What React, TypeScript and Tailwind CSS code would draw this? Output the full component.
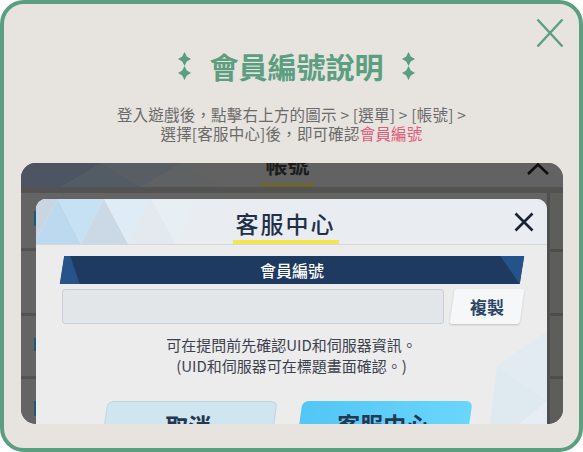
import React from 'react';

const font = { fontFamily: '"Noto Sans CJK TC", "Noto Sans", sans-serif' };

function Sparkle() {
    return (
        <svg width="13" height="28" viewBox="0 0 13 28" className="shrink-0">
            <path d="M6.5 0 L8.8 4.6 L13 7 L8.8 9.4 L6.5 14 L4.2 9.4 L0 7 L4.2 4.6Z" fill="#5b9e80" />
            <path d="M6.5 14 L8.8 18.6 L13 21 L8.8 23.4 L6.5 28 L4.2 23.4 L0 21 L4.2 18.6Z" fill="#5b9e80" />
        </svg>
    );
}

function LeftStrip() {
    return (
        <div className="w-[15px] flex flex-col items-end bg-[#646464]">
            <div className="h-[18px]" />
            <div className="h-[15px] w-[2px] bg-[#1d5874]" />
            <div className="h-[22px]" />
            <div className="h-[3px] w-full bg-[#535353]" />
            <div className="h-[62px]" />
            <div className="h-[3px] w-full bg-[#535353]" />
            <div className="h-[22px]" />
            <div className="h-[13px] w-[2px] bg-[#1d5874]" />
            <div className="h-[25px]" />
            <div className="h-[3px] w-full bg-[#535353]" />
            <div className="h-[22px]" />
            <div className="h-[15px] w-[2px] bg-[#1d5874]" />
        </div>
    );
}

function RightStrip() {
    return (
        <div className="w-[16px] flex flex-col border-l-[3px] border-[#4f4f4d] bg-[#5d5d5b]">
            <div className="h-[56px]" />
            <div className="h-[3px] w-full bg-[#4d4d4b]" />
            <div className="h-[61px]" />
            <div className="h-[3px] w-full bg-[#4d4d4b]" />
            <div className="h-[60px]" />
            <div className="h-[3px] w-full bg-[#4d4d4b]" />
        </div>
    );
}

function GameModal() {
    return (
        <div className="flex-1 flex flex-col rounded-t-[10px] overflow-hidden bg-[#ececec] relative">
            <div className="relative h-[46px] shrink-0 bg-[#e9edf1] border-b border-[#d4d8dc] flex flex-col items-center justify-end pr-[11px]">
                <svg className="absolute left-0 top-0" width="180" height="45" viewBox="0 0 180 45">
                    <polygon points="0,0 22,0 0,40" fill="#c9d6e1" />
                    <polygon points="0,45 0,40 22,0 45,45" fill="#bcd9ef" />
                    <polygon points="22,0 68,0 45,45" fill="#c6e0f4" />
                    <polygon points="45,45 68,0 92,45" fill="#cbd9e6" />
                    <polygon points="68,0 115,0 92,45" fill="#dfebf5" />
                    <polygon points="92,45 115,0 140,45" fill="#e3e9ef" />
                    <polygon points="115,0 160,0 140,45" fill="#e7eef4" />
                </svg>
                <div className="relative text-[23px] leading-[28px] font-medium tracking-[2px] text-[#1f3049] mb-[3px]">客服中心</div>
                <div className="relative w-[106px] h-[4px] bg-[#f4e54a]" />
                <svg className="absolute left-[478px] top-[13px]" width="20" height="20" viewBox="0 0 20 20">
                    <path d="M1.5 1.5 L18.5 18.5 M18.5 1.5 L1.5 18.5" stroke="#1a2232" strokeWidth="2.6" />
                </svg>
            </div>
            <div className="relative flex-1 flex flex-col pl-[26px] pr-[25px]">
                <svg className="absolute right-0 bottom-0" width="140" height="140" viewBox="0 0 140 140">
                    <polygon points="140,20 140,90 90,55" fill="#e2ebf1" />
                    <polygon points="90,55 140,90 80,140" fill="#dfe9f0" />
                    <polygon points="140,90 140,140 80,140" fill="#e6eef3" />
                    <polygon points="20,140 60,90 80,140" fill="#e8eef2" />
                </svg>
                <div className="relative mt-[11px] h-[28px] -skew-x-[9deg] bg-[#1f3a60] overflow-hidden flex items-center justify-center">
                    <svg className="absolute inset-0" width="100%" height="28" preserveAspectRatio="none" viewBox="0 0 462 28">
                        <polygon points="0,0 6,0 20,28 0,28" fill="#26548a" />
                        <polygon points="438,0 462,0 462,28" fill="#24538a" />
                    </svg>
                    <span className="relative skew-x-[9deg] text-white text-[16px] font-medium leading-[20px]">會員編號</span>
                </div>
                <div className="relative mt-[5px] h-[35px] flex gap-[8px]">
                    <div className="flex-1 bg-[#e2e6e8] border border-[#cbd0d5] rounded-[3px]" />
                    <div className="w-[70px] -skew-x-[8deg] bg-[#f6f7f8] rounded-[3px] shadow-[0_1px_2px_rgba(0,0,0,0.18)] flex items-center justify-center">
                        <span className="skew-x-[8deg] text-[17px] font-bold text-[#2b4566]">複製</span>
                    </div>
                </div>
                <div className="relative mt-[10px] text-center text-[15px] leading-[21px] text-[#3c424d]">
                    <div>可在提問前先確認UID和伺服器資訊。</div>
                    <div>(UID和伺服器可在標題畫面確認。)</div>
                </div>
                <div className="relative mt-[25px] flex justify-center gap-[25px] pr-[10px]">
                    <div className="w-[170px] h-[50px] -skew-x-[8deg] rounded-[6px] bg-[#cfe6f0] border border-[#b9d6e3] flex justify-center pt-[9px]">
                        <span className="skew-x-[8deg] text-[23px] font-bold leading-[28px] text-[#243852]">取消</span>
                    </div>
                    <div className="w-[170px] h-[50px] -skew-x-[8deg] rounded-[6px] bg-[linear-gradient(90deg,#52c6f6,#6ad6fc)] flex justify-center pt-[9px]">
                        <span className="skew-x-[8deg] text-[23px] font-bold leading-[28px] text-[#243852]">客服中心</span>
                    </div>
                </div>
            </div>
        </div>
    );
}

export default function App() {
    return (
        <div style={font} className="w-[583px] h-[452px] bg-[#e7e4df] border-4 border-[#5b9e80] rounded-[24px] relative overflow-hidden flex flex-col items-center">
            <svg className="absolute right-[15px] top-[14px]" width="28" height="30" viewBox="0 0 28 30">
                <path d="M1.5 1.5 L26.5 28.5 M26.5 1.5 L1.5 28.5" stroke="#5b9e80" strokeWidth="2.4" />
            </svg>

            <div className="mt-[44px] ml-[10px] flex items-center gap-[18px]">
                <Sparkle />
                <h1 className="text-[29px] leading-[36px] font-bold text-[#5b9e80]">會員編號說明</h1>
                <Sparkle />
            </div>

            <div className="mt-[21px] text-center text-[15.5px] tracking-[0.2px] leading-[19px] text-[#6a6a6a]">
                <div>登入遊戲後，點擊右上方的圖示 &gt; [選單] &gt; [帳號] &gt;</div>
                <div>
                    選擇[客服中心]後，即可確認<span className="text-[#e0587a]">會員編號</span>
                </div>
            </div>

            <div className="mt-[20px] w-[542px] h-[261px] shrink-0 rounded-[15px] overflow-hidden bg-[#646464] flex flex-col">
                <div className="relative h-[24px] shrink-0 bg-[#626262] flex flex-col items-center overflow-hidden">
                    <svg className="absolute left-0 top-0" width="220" height="24" viewBox="0 0 220 24">
                        <polygon points="0,0 80,0 40,24 0,24" fill="#4c5561" />
                        <polygon points="40,24 80,0 120,24" fill="#535b64" />
                        <polygon points="80,0 160,0 120,24" fill="#595e64" />
                        <polygon points="120,24 160,0 200,24" fill="#5f6163" />
                    </svg>
                    <div className="relative -mt-[13px] mr-[8px] text-[22px] leading-[26px] font-bold text-[#1c1c1c]">帳號</div>
                    <div className="relative mt-auto mr-[8px] w-[53px] h-[4px] bg-[#6d6531]" />
                    <svg className="absolute right-[14px] top-0" width="22" height="12" viewBox="0 0 22 12">
                        <path d="M1 11 L11 1.5 L21 11" stroke="#0e0e0e" strokeWidth="2.6" fill="none" />
                    </svg>
                </div>
                <div className="h-[6px] shrink-0 bg-[#535351]" />
                <div className="flex-1 flex">
                    <LeftStrip />
                    <div className="flex-1 flex flex-col pt-[6px]">
                        <GameModal />
                    </div>
                    <RightStrip />
                </div>
            </div>
        </div>
    );
}
